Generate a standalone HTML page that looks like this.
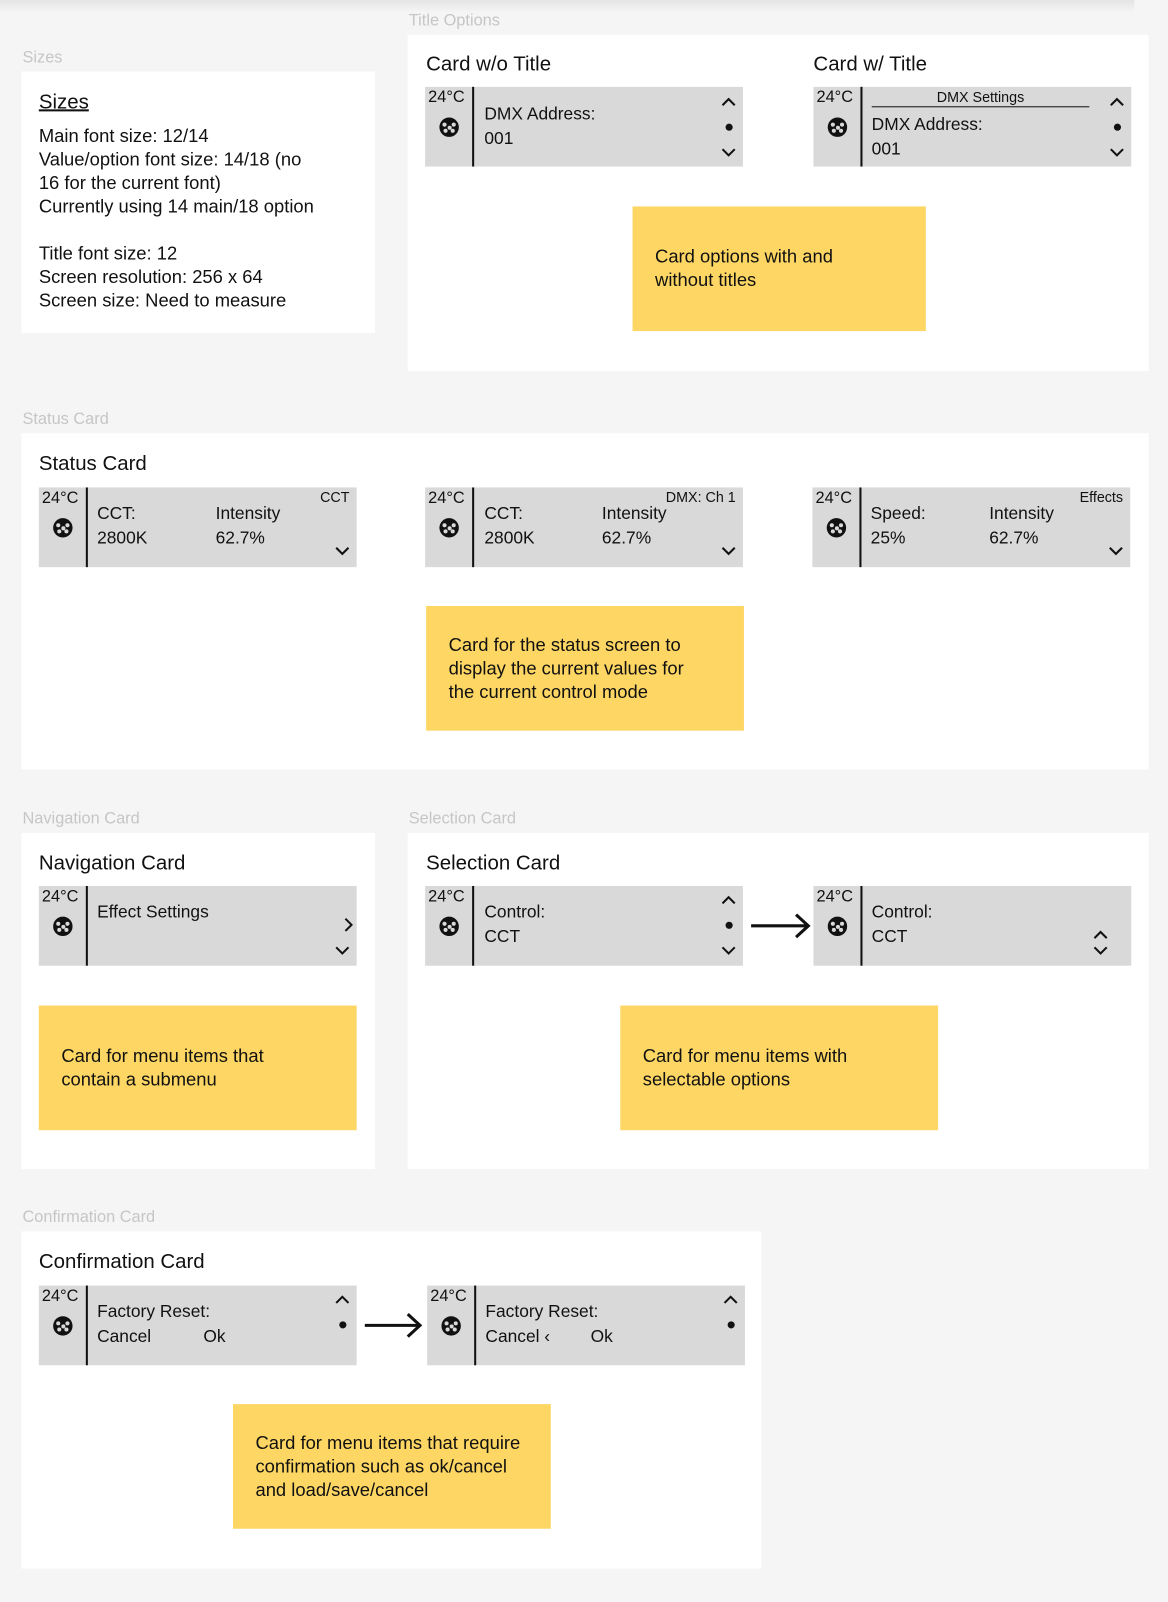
<!DOCTYPE html>
<html><head><meta charset="utf-8"><style>
*{margin:0;padding:0;box-sizing:border-box}
body{width:1168px;height:1602px;background:#f5f5f5;font-family:"Liberation Sans",Arial,sans-serif;color:#111;position:relative;overflow:hidden}
#w{position:absolute;left:0;top:0;width:1143px;height:1568px;transform:scale(1.0219);transform-origin:0 0}
.a{position:absolute}
.shadow{left:0;top:0;width:1110px;height:12px;background:linear-gradient(#e4e4e4,#f5f5f5)}
.lbl{font-size:16px;color:#c6c6c6;white-space:nowrap}
.panel{background:#fff}
.h{font-size:20px;white-space:nowrap}
.card{width:311px;height:78px;background:#d9d9d9}
.card .l{position:absolute;left:0;top:0;width:48px;height:78px;border-right:2px solid #111}
.card .t{position:absolute;left:3px;top:2px;font-size:16px}
.card .ic{position:absolute;left:14px;top:30px;width:19px;height:19px;border-radius:50%;background:#111}
.card .ic i{position:absolute;width:4px;height:4px;border-radius:50%;background:#d9d9d9}
.tx{position:absolute;font-size:17px;white-space:nowrap;line-height:24px}
.sm{position:absolute;font-size:14px;white-space:nowrap;line-height:18px}
.note{background:#fdd663;font-size:18px;line-height:23px;padding-left:22px;display:flex;align-items:center}
svg{position:absolute}
.dot{position:absolute;width:7px;height:7px;border-radius:50%;background:#111}
</style></head><body><div id="w">
<div class="a shadow"></div>

<div class="a lbl" style="left:22px;top:48px">Sizes</div>
<div class="a lbl" style="left:400px;top:12px">Title Options</div>
<div class="a lbl" style="left:22px;top:402px">Status Card</div>
<div class="a lbl" style="left:22px;top:793px">Navigation Card</div>
<div class="a lbl" style="left:400px;top:793px">Selection Card</div>
<div class="a lbl" style="left:22px;top:1183px">Confirmation Card</div>

<div class="a panel" style="left:21px;top:70px;width:346px;height:256px"></div>
<div class="a panel" style="left:399px;top:34px;width:725px;height:329px"></div>
<div class="a panel" style="left:21px;top:424px;width:1103px;height:329px"></div>
<div class="a panel" style="left:21px;top:815px;width:346px;height:329px"></div>
<div class="a panel" style="left:399px;top:815px;width:725px;height:329px"></div>
<div class="a panel" style="left:21px;top:1205px;width:724px;height:330px"></div>

<!-- Sizes -->
<div class="a h" style="left:38px;top:89px;text-decoration:underline">Sizes</div>
<div class="a" style="left:38px;top:122px;font-size:18px;line-height:23px;width:320px">Main font size: 12/14<br>Value/option font size: 14/18 (no<br>16 for the current font)<br>Currently using 14 main/18 option<br><br>Title font size: 12<br>Screen resolution: 256 x 64<br>Screen size: Need to measure</div>

<!-- Title options -->
<div class="a h" style="left:417px;top:52px">Card w/o Title</div>
<div class="a h" style="left:796px;top:52px">Card w/ Title</div>

<div class="a card" style="left:416px;top:85px">
 <div class="l"><div class="t">24°C</div><div class="ic"><i style="left:3px;top:5px"></i><i style="left:12px;top:5px"></i><i style="left:7.5px;top:7.5px"></i><i style="left:4px;top:11px"></i><i style="left:11px;top:11px"></i></div></div>
 <div class="tx" style="left:58px;top:15px">DMX Address:</div>
 <div class="tx" style="left:58px;top:39px">001</div>
 <svg style="left:290px;top:10px" width="14" height="10"><polyline points="1,8 7,2 13,8" fill="none" stroke="#111" stroke-width="2"/></svg>
 <div class="dot" style="left:294px;top:36px"></div>
 <svg style="left:290px;top:59px" width="14" height="10"><polyline points="1,2 7,8 13,2" fill="none" stroke="#111" stroke-width="2"/></svg>
</div>

<div class="a card" style="left:796px;top:85px">
 <div class="l"><div class="t">24°C</div><div class="ic"><i style="left:3px;top:5px"></i><i style="left:12px;top:5px"></i><i style="left:7.5px;top:7.5px"></i><i style="left:4px;top:11px"></i><i style="left:11px;top:11px"></i></div></div>
 <div class="sm" style="left:57px;top:1px;width:213px;text-align:center;border-bottom:1.5px solid #111">DMX Settings</div>
 <div class="tx" style="left:57px;top:25px">DMX Address:</div>
 <div class="tx" style="left:57px;top:49px">001</div>
 <svg style="left:290px;top:10px" width="14" height="10"><polyline points="1,8 7,2 13,8" fill="none" stroke="#111" stroke-width="2"/></svg>
 <div class="dot" style="left:294px;top:36px"></div>
 <svg style="left:290px;top:59px" width="14" height="10"><polyline points="1,2 7,8 13,2" fill="none" stroke="#111" stroke-width="2"/></svg>
</div>

<div class="a note" style="left:619px;top:202px;width:287px;height:122px">Card options with and<br>without titles</div>

<!-- Status -->
<div class="a h" style="left:38px;top:443px">Status Card</div>

<div class="a card" style="left:38px;top:477px">
 <div class="l"><div class="t">24°C</div><div class="ic"><i style="left:3px;top:5px"></i><i style="left:12px;top:5px"></i><i style="left:7.5px;top:7.5px"></i><i style="left:4px;top:11px"></i><i style="left:11px;top:11px"></i></div></div>
 <div class="sm" style="right:7px;top:0px">CCT</div>
 <div class="tx" style="left:57px;top:14px">CCT:</div>
 <div class="tx" style="left:57px;top:38px">2800K</div>
 <div class="tx" style="left:173px;top:14px">Intensity</div>
 <div class="tx" style="left:173px;top:38px">62.7%</div>
 <svg style="left:290px;top:57px" width="14" height="10"><polyline points="1,2 7,8 13,2" fill="none" stroke="#111" stroke-width="2"/></svg>
</div>

<div class="a card" style="left:416px;top:477px">
 <div class="l"><div class="t">24°C</div><div class="ic"><i style="left:3px;top:5px"></i><i style="left:12px;top:5px"></i><i style="left:7.5px;top:7.5px"></i><i style="left:4px;top:11px"></i><i style="left:11px;top:11px"></i></div></div>
 <div class="sm" style="right:7px;top:0px">DMX: Ch 1</div>
 <div class="tx" style="left:58px;top:14px">CCT:</div>
 <div class="tx" style="left:58px;top:38px">2800K</div>
 <div class="tx" style="left:173px;top:14px">Intensity</div>
 <div class="tx" style="left:173px;top:38px">62.7%</div>
 <svg style="left:290px;top:57px" width="14" height="10"><polyline points="1,2 7,8 13,2" fill="none" stroke="#111" stroke-width="2"/></svg>
</div>

<div class="a card" style="left:795px;top:477px">
 <div class="l"><div class="t">24°C</div><div class="ic"><i style="left:3px;top:5px"></i><i style="left:12px;top:5px"></i><i style="left:7.5px;top:7.5px"></i><i style="left:4px;top:11px"></i><i style="left:11px;top:11px"></i></div></div>
 <div class="sm" style="right:7px;top:0px">Effects</div>
 <div class="tx" style="left:57px;top:14px">Speed:</div>
 <div class="tx" style="left:57px;top:38px">25%</div>
 <div class="tx" style="left:173px;top:14px">Intensity</div>
 <div class="tx" style="left:173px;top:38px">62.7%</div>
 <svg style="left:290px;top:57px" width="14" height="10"><polyline points="1,2 7,8 13,2" fill="none" stroke="#111" stroke-width="2"/></svg>
</div>

<div class="a note" style="left:417px;top:593px;width:311px;height:122px">Card for the status screen to<br>display the current values for<br>the current control mode</div>

<!-- Navigation -->
<div class="a h" style="left:38px;top:834px">Navigation Card</div>
<div class="a card" style="left:38px;top:867px">
 <div class="l"><div class="t">24°C</div><div class="ic"><i style="left:3px;top:5px"></i><i style="left:12px;top:5px"></i><i style="left:7.5px;top:7.5px"></i><i style="left:4px;top:11px"></i><i style="left:11px;top:11px"></i></div></div>
 <div class="tx" style="left:57px;top:14px">Effect Settings</div>
 <svg style="left:298px;top:31px" width="10" height="14"><polyline points="2,1 8,7 2,13" fill="none" stroke="#111" stroke-width="2"/></svg>
 <svg style="left:290px;top:58px" width="14" height="10"><polyline points="1,2 7,8 13,2" fill="none" stroke="#111" stroke-width="2"/></svg>
</div>
<div class="a note" style="left:38px;top:984px;width:311px;height:122px">Card for menu items that<br>contain a submenu</div>

<!-- Selection -->
<div class="a h" style="left:417px;top:834px">Selection Card</div>
<div class="a card" style="left:416px;top:867px">
 <div class="l"><div class="t">24°C</div><div class="ic"><i style="left:3px;top:5px"></i><i style="left:12px;top:5px"></i><i style="left:7.5px;top:7.5px"></i><i style="left:4px;top:11px"></i><i style="left:11px;top:11px"></i></div></div>
 <div class="tx" style="left:58px;top:14px">Control:</div>
 <div class="tx" style="left:58px;top:38px">CCT</div>
 <svg style="left:290px;top:9px" width="14" height="10"><polyline points="1,8 7,2 13,8" fill="none" stroke="#111" stroke-width="2"/></svg>
 <div class="dot" style="left:294px;top:35px"></div>
 <svg style="left:290px;top:58px" width="14" height="10"><polyline points="1,2 7,8 13,2" fill="none" stroke="#111" stroke-width="2"/></svg>
</div>
<svg style="left:734px;top:893px" width="60" height="26"><line x1="1" y1="13" x2="56" y2="13" stroke="#111" stroke-width="3"/><polyline points="45,2 57,13 45,24" fill="none" stroke="#111" stroke-width="3"/></svg>
<div class="a card" style="left:796px;top:867px">
 <div class="l"><div class="t">24°C</div><div class="ic"><i style="left:3px;top:5px"></i><i style="left:12px;top:5px"></i><i style="left:7.5px;top:7.5px"></i><i style="left:4px;top:11px"></i><i style="left:11px;top:11px"></i></div></div>
 <div class="tx" style="left:57px;top:14px">Control:</div>
 <div class="tx" style="left:57px;top:38px">CCT</div>
 <svg style="left:274px;top:43px" width="14" height="10"><polyline points="1,8 7,2 13,8" fill="none" stroke="#111" stroke-width="2"/></svg>
 <svg style="left:274px;top:58px" width="14" height="10"><polyline points="1,2 7,8 13,2" fill="none" stroke="#111" stroke-width="2"/></svg>
</div>
<div class="a note" style="left:607px;top:984px;width:311px;height:122px">Card for menu items with<br>selectable options</div>

<!-- Confirmation -->
<div class="a h" style="left:38px;top:1224px">Confirmation Card</div>
<div class="a card" style="left:38px;top:1258px">
 <div class="l"><div class="t">24°C</div><div class="ic"><i style="left:3px;top:5px"></i><i style="left:12px;top:5px"></i><i style="left:7.5px;top:7.5px"></i><i style="left:4px;top:11px"></i><i style="left:11px;top:11px"></i></div></div>
 <div class="tx" style="left:57px;top:14px">Factory Reset:</div>
 <div class="tx" style="left:57px;top:38px">Cancel</div>
 <div class="tx" style="left:161px;top:38px">Ok</div>
 <svg style="left:290px;top:9px" width="14" height="10"><polyline points="1,8 7,2 13,8" fill="none" stroke="#111" stroke-width="2"/></svg>
 <div class="dot" style="left:294px;top:35px"></div>
</div>
<svg style="left:356px;top:1284px" width="60" height="26"><line x1="1" y1="13" x2="54" y2="13" stroke="#111" stroke-width="3"/><polyline points="43,2 55,13 43,24" fill="none" stroke="#111" stroke-width="3"/></svg>
<div class="a card" style="left:418px;top:1258px">
 <div class="l"><div class="t">24°C</div><div class="ic"><i style="left:3px;top:5px"></i><i style="left:12px;top:5px"></i><i style="left:7.5px;top:7.5px"></i><i style="left:4px;top:11px"></i><i style="left:11px;top:11px"></i></div></div>
 <div class="tx" style="left:57px;top:14px">Factory Reset:</div>
 <div class="tx" style="left:57px;top:38px">Cancel ‹</div>
 <div class="tx" style="left:160px;top:38px">Ok</div>
 <svg style="left:290px;top:9px" width="14" height="10"><polyline points="1,8 7,2 13,8" fill="none" stroke="#111" stroke-width="2"/></svg>
 <div class="dot" style="left:294px;top:35px"></div>
</div>
<div class="a note" style="left:228px;top:1374px;width:311px;height:122px">Card for menu items that require<br>confirmation such as ok/cancel<br>and load/save/cancel</div>
</div></body></html>
